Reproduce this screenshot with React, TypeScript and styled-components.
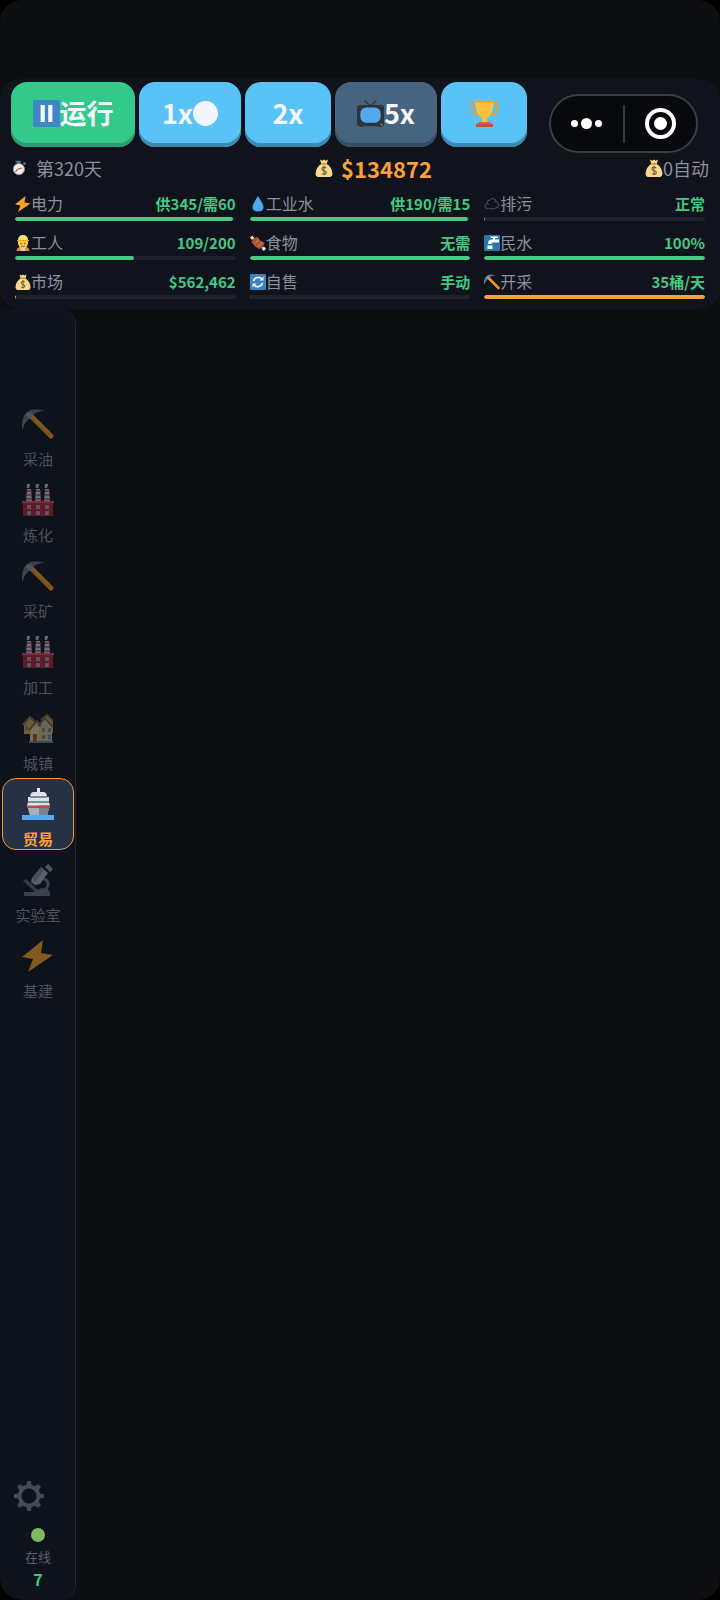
import { useState } from "react";
import type { ReactNode } from "react";
import styled, { createGlobalStyle } from "styled-components";

const GlobalStyle = createGlobalStyle`
  * {
    box-sizing: border-box;
  }
  html {
    background: #000;
  }
  body {
    margin: 0;
    font-family: "Noto Sans CJK SC", "Noto Sans", sans-serif;
  }
  button {
    font-family: inherit;
    border: none;
    cursor: pointer;
  }
`;

const Screen = styled.div`
  position: relative;
  display: flex;
  flex-direction: column;
  min-height: 100vh;
  padding-top: 79px;
  background: #0c0e12;
  border-radius: 22px;
  overflow: hidden;
`;

const Header = styled.header`
  padding: 3px 11px 10px;
  background: #10131c;
  border-radius: 20px;
`;

const Toolbar = styled.div`
  display: flex;
  gap: 4px;
`;

const tones = {
  green: ["#32c98a", "#2d9a74"],
  blue: ["#59c3f7", "#3e87ae"],
  slate: ["#466480", "#384d64"],
};

const SpeedButton = styled.button<{ $tone: keyof typeof tones; $width: number }>`
  display: flex;
  align-items: center;
  justify-content: center;
  width: ${(p) => p.$width}px;
  height: 65px;
  padding: 0 0 3px;
  color: #f4f7fc;
  font-size: 27px;
  font-weight: 700;
  line-height: 32px;
  border-radius: 16px;
  background: ${(p) => tones[p.$tone][0]};
  box-shadow: inset 0 -4px 0 ${(p) => tones[p.$tone][1]};
`;

const Dot = styled.span<{ $size: number; $color: string }>`
  width: ${(p) => p.$size}px;
  height: ${(p) => p.$size}px;
  border-radius: 50%;
  background: ${(p) => p.$color};
`;

/* floats over the header, like the host app's own menu */
const Capsule = styled.div`
  position: absolute;
  top: 94px;
  right: 22px;
  display: flex;
  align-items: center;
  width: 149px;
  height: 59px;
  border: 2px solid #3c3e44;
  border-radius: 30px;
  background: #08090d;
`;

const CapsuleButton = styled.button`
  display: flex;
  flex: 1;
  align-items: center;
  justify-content: center;
  gap: 3px;
  height: 100%;
  padding: 0;
  background: none;
`;

const CapsuleLine = styled.span`
  width: 2px;
  height: 38px;
  background: #36383e;
`;

const Ring = styled.span`
  display: flex;
  align-items: center;
  justify-content: center;
  width: 31px;
  height: 31px;
  border: 4px solid #fff;
  border-radius: 50%;
`;

const StatusRow = styled.div`
  display: flex;
  align-items: center;
  justify-content: space-between;
  margin: 7px 0 9px;
  height: 28px;
`;

const Status = styled.div<{ $gap?: number }>`
  display: flex;
  align-items: center;
  gap: ${(p) => p.$gap ?? 0}px;
  color: #8c909b;
  font-size: 18px;
  line-height: 28px;
`;

const Money = styled.strong`
  color: #f9a03a;
  font-size: 22px;
  font-weight: 700;
`;

const Meters = styled.div`
  display: grid;
  grid-template-columns: repeat(3, minmax(0, 1fr));
  gap: 10px 14px;
  padding: 1px 4px 0;
`;

const MeterHead = styled.div`
  display: flex;
  align-items: center;
  height: 25px;
  padding-bottom: 2px;
  line-height: 23px;
  white-space: nowrap;
`;

const MeterLabel = styled.span`
  flex: 1;
  color: #8c909b;
  font-size: 16px;
`;

const MeterValue = styled.span`
  color: #43c883;
  font-size: 15px;
  font-weight: 700;
`;

const Track = styled.div`
  height: 4px;
  border-radius: 2px;
  background: #1e212a;
  overflow: hidden;
`;

const Fill = styled.div<{ $color: string }>`
  height: 100%;
  min-width: 1px;
  border-radius: 2px;
  background: ${(p) => p.$color};
`;

const Sidebar = styled.aside`
  display: flex;
  flex: 1;
  flex-direction: column;
  justify-content: space-between;
  width: 76px;
  padding: 89px 1px 9px 2px;
  background: #0e121a;
  border-right: 1px solid #23272f;
  border-radius: 0 16px 16px 22px;
`;

const Nav = styled.nav`
  display: flex;
  flex-direction: column;
  gap: 4px;
`;

const NavButton = styled.button<{ $active: boolean }>`
  display: flex;
  flex-direction: column;
  align-items: center;
  width: 72px;
  height: 72px;
  padding: 9px 0 0;
  border: 1px solid ${(p) => (p.$active ? "#f0992f" : "transparent")};
  border-radius: 14px;
  background: ${(p) => (p.$active ? "#273146" : "none")};
  color: ${(p) => (p.$active ? "#f9a03a" : "#8c909b")};
  font-size: 15px;
  font-weight: ${(p) => (p.$active ? 700 : 400)};
  line-height: 20px;

  > * {
    opacity: ${(p) => (p.$active ? 1 : 0.5)};
  }
`;

const NavText = styled.span`
  margin-top: 9px;
`;

const SideFooter = styled.div`
  display: flex;
  flex-direction: column;
  align-items: center;
  color: #5a5e69;
  font-size: 13px;
  line-height: 20px;
`;

const GearButton = styled.button`
  align-self: flex-start;
  height: 30px;
  margin: 0 0 17px 12px;
  padding: 0;
  background: none;
`;

const OnlineText = styled.span`
  margin-top: 5px;
`;

const OnlineCount = styled.strong`
  color: #3cc886;
  font-size: 16px;
  line-height: 24px;
`;

const Svg = styled.svg`
  display: block;
  flex: none;
`;

const icons: Record<string, ReactNode> = {
  pause: (
    <>
      <rect width="32" height="32" rx="2" fill="#4186c4" />
      <path d="M9 6h5v20H9zM18 6h5v20h-5z" fill="#f4f7fc" />
    </>
  ),
  tv: (
    <>
      <path d="M9 1l7 6 7-6" fill="none" stroke="#2d3640" strokeWidth="1.6" />
      <rect y="6" width="32" height="25" rx="3" fill="#2b353e" />
      <path d="M3 29h4v3H3zM25 29h4v3h-4z" fill="#2b353e" />
      <rect x="4" y="9" width="24" height="18" rx="7" fill="#56a8ed" />
      <circle cx="29" cy="29" r="1" fill="#9aa5af" />
    </>
  ),
  trophy: (
    <>
      <path
        d="M7 4H1q0 9 2 12 2 2 8 1M25 4h6q0 9-2 12-2 2-8 1"
        fill="none"
        stroke="#e0a042"
        strokeWidth="2.500"
      />
      <path d="M5 1h22q0 17-8 20v6h-6v-6Q5 18 5 1z" fill="#fdc23b" />
      <path d="M5 1h22v2H5z" fill="#e9a238" />
      <path d="M9 26h14v3H9z" fill="#d2693c" />
      <path d="M6 28h20v4H6z" fill="#bf5138" />
    </>
  ),
  watch: (
    <>
      <path d="M8 3h10v3h-3v3h-4V6H8zM21 8l3-3 3 3-3 3z" fill="#5f7073" />
      <circle cx="14" cy="18" r="10" fill="#e6e8e8" stroke="#8b989d" strokeWidth="1.500" />
      <circle cx="14" cy="18" r="7" fill="#f6f3f1" />
      <path d="M8 23l4-5 8-2" fill="none" stroke="#be4d4d" strokeWidth="2" />
    </>
  ),
  money: (
    <>
      <path
        d="M9 1l4 2 3-2 3 2 4-2-2 8q9 6 10 16 0 7-5 7H6q-5 0-5-7Q2 15 11 9z"
        fill="#f8d98b"
      />
      <path d="M11 7h10v3H11z" fill="#c99545" />
      <path
        d="M20 16q-4-3-7 0-2 4 3 5t4 4q-3 4-8 1M16 12v17"
        fill="none"
        stroke="#6c5942"
        strokeWidth="2"
      />
    </>
  ),
  bolt: <path d="M21 0L0 17l11 2L6 32l25-17-12-2z" fill="#f9a324" />,
  worker: (
    <>
      <path d="M3 32q0-9 13-9t13 9z" fill="#e98b2a" />
      <path d="M10 23h12l-2 9h-8z" fill="#c9d3d7" />
      <path d="M6 9h20v8q-2 10-10 10T6 17z" fill="#fbcf39" />
      <path d="M6 11Q6 0 16 0t10 11z" fill="#f5e070" />
      <path d="M4 10h24v2H4z" fill="#e0ac3a" />
      <circle cx="12" cy="17" r="1.300" fill="#574031" />
      <circle cx="20" cy="17" r="1.300" fill="#574031" />
      <path d="M12 22q4 2 8 0" fill="none" stroke="#704f26" strokeWidth="1.500" />
    </>
  ),
  drop: <path d="M16 0q11 17 11 22 0 9-11 9T5 22Q5 17 16 0z" fill="#4ca7f3" />,
  food: (
    <>
      <path d="M4 4l24 24" stroke="#f2dec0" strokeWidth="3" />
      <path d="M0 5l5-4 3 5-4 4zM23 28l5-5 4 4-4 5z" fill="#f2dec0" />
      <path d="M3 14Q6 5 15 4q4 8 14 11-1 11-11 13Q9 24 3 14z" fill="#a95335" />
      <path d="M9 17q7-2 8-10M15 23q7-2 9-9" fill="none" stroke="#d98261" strokeWidth="2" />
    </>
  ),
  refresh: (
    <>
      <rect width="32" height="32" rx="2" fill="#3c82bd" />
      <path
        d="M7 14a10 10 0 0 1 17-4M25 18a10 10 0 0 1-17 4"
        fill="none"
        stroke="#eef5fa"
        strokeWidth="3.500"
      />
      <path d="M19 13h8V5zM13 19H5v8z" fill="#eef5fa" />
    </>
  ),
  cloud: (
    <path
      d="M9 25q-7 1-7-5 0-4 4-5-1-7 6-7 3-5 8-2 4 0 4 5 6 2 5 7 0 6-6 6-3 3-7 1-4 2-7 0zM6 15q1 3 4 2M24 11q-3 0-4 2"
      fill="none"
      stroke="#656873"
      strokeWidth="1.500"
    />
  ),
  tap: (
    <>
      <rect width="32" height="32" rx="2" fill="#2d76ac" />
      <path d="M13 3h15v3h-6v3h8v6H18q-3 0-3 3H8q0-8 6-9h4V6h-5zM7 21h10v7H7z" fill="#fff" />
    </>
  ),
  pickaxe: (
    <>
      <path d="M9 8l20 20" stroke="#ef9629" strokeWidth="5" strokeLinecap="round" />
      <path d="M0 21Q-1 9 5 4 11-1 23 3q-8 0-12 4l-5 5q-4 3-5 9z" fill="#68777f" />
      <path d="M4 7l4-3 4 3-4 4z" fill="#8796a0" />
    </>
  ),
  factory: (
    <>
      <path d="M4 18l1-13h4l1 13zM13 18l1-13h4l1 13zM22 18l1-13h4l1 13z" fill="#d6d2da" />
      <path
        d="M5 7h5M4 11h6M4 15h6M14 7h5M13 11h6M13 15h6M23 7h5M22 11h6M22 15h6"
        stroke="#9e4456"
        strokeWidth="1.500"
      />
      <path d="M6 4V1h2M15 4V1h2M24 4V1h2" fill="none" stroke="#b4bec6" strokeWidth="2.500" />
      <path d="M1 18h30v14H1z" fill="#b72035" />
      <path d="M0 17h32v2H0z" fill="#d0555f" />
      <path
        d="M5 21h4v4H5zM14 21h4v4h-4zM23 21h4v4h-4zM5 27h4v4H5zM14 27h4v4h-4zM23 27h4v4h-4z"
        fill="#a59aa8"
      />
    </>
  ),
  houses: (
    <>
      <path d="M2 13l6-7 7 7v9H2zM19 9l6-5 6 6v11H19z" fill="#d5a545" />
      <path d="M1 13l7-8 6 6M19 8l6-5 6 6" fill="none" stroke="#8c7043" strokeWidth="2" />
      <path d="M8 17l7-8 7 8v13H8z" fill="#dccb92" />
      <path d="M17 14l6-8 7 8v16H17z" fill="#c9bc8b" />
      <path d="M7 18l8-9 4 5M16 14l7-8 8 9" fill="none" stroke="#76624f" strokeWidth="2" />
      <path d="M20 16h3v4h-3zM26 16h3v4h-3zM20 23h3v4h-3zM26 23h3v4h-3zM3 14h3v4H3z" fill="#618aa5" />
      <path d="M11 22h4v7h-4z" fill="#a6513d" />
      <path d="M7 29h24v2H7z" fill="#76836d" />
    </>
  ),
  ship: (
    <>
      <path d="M15 0h3v5h-3z" fill="#e4e7eb" />
      <path d="M11 4h11q3 1 3 5h2v5l1 4H5l1-4V9h2q0-4 3-5z" fill="#dfe2e8" />
      <path d="M8 9h17M6 14h21" stroke="#626b75" strokeWidth="1.500" />
      <path d="M5 17h23l-3 11H8z" fill="#a9afb9" />
      <path d="M17 17h11l-3 11h-8z" fill="#7b828e" />
      <path d="M5 18h23v2H5z" fill="#c24450" />
      <path d="M0 27h32v5H0z" fill="#55a9f2" />
    </>
  ),
  microscope: (
    <>
      <path d="M1 17l3-2 12 11-2 3z" fill="#5c6a73" />
      <path d="M20 14q9 3 5 10-2 4-8 4" fill="none" stroke="#65747d" strokeWidth="3" />
      <path d="M2 28h12q3-4 7-4t7 4v4H2z" fill="#69767e" />
      <path d="M10 14l9-11 7 6-8 11-5 1-4-3z" fill="#a5afb9" />
      <path d="M10 14l9-11 3 3-9 12z" fill="#7d8d98" />
      <path d="M23 3l3-3 5 5-3 3z" fill="#8d99a4" />
    </>
  ),
  gear: (
    <>
      <circle cx="16" cy="16" r="10" fill="none" stroke="#444b53" strokeWidth="4" />
      <g fill="#444b53">
        {[0, 45, 90, 135, 180, 225, 270, 315].map((a) => (
          <path key={a} d="M13 5l1-5h4l1 5z" transform={`rotate(${a} 16 16)`} />
        ))}
      </g>
    </>
  ),
};

function Icon({ name, size }: { name: string; size: number }) {
  return (
    <Svg width={size} height={size} viewBox="0 0 32 32" aria-hidden="true">
      {icons[name]}
    </Svg>
  );
}

const GREEN = "#4ac982";
const ORANGE = "#f9a03a";

const meters = [
  { icon: "bolt", label: "电力", value: "供345/需60", percent: 99, color: GREEN },
  { icon: "drop", label: "工业水", value: "供190/需15", percent: 99, color: GREEN },
  { icon: "cloud", label: "排污", value: "正常", percent: 0, color: "#8c909b" },
  { icon: "worker", label: "工人", value: "109/200", percent: 54, color: GREEN },
  { icon: "food", label: "食物", value: "无需", percent: 100, color: GREEN },
  { icon: "tap", label: "民水", value: "100%", percent: 100, color: GREEN },
  { icon: "money", label: "市场", value: "$562,462", percent: 0, color: ORANGE },
  { icon: "refresh", label: "自售", value: "手动", percent: 0, color: "#3a3e48" },
  { icon: "pickaxe", label: "开采", value: "35桶/天", percent: 100, color: ORANGE },
];

const sections = [
  { icon: "pickaxe", label: "采油" },
  { icon: "factory", label: "炼化" },
  { icon: "pickaxe", label: "采矿" },
  { icon: "factory", label: "加工" },
  { icon: "houses", label: "城镇" },
  { icon: "ship", label: "贸易" },
  { icon: "microscope", label: "实验室" },
  { icon: "bolt", label: "基建" },
];

export default function App() {
  const [section, setSection] = useState("贸易");

  return (
    <>
      <GlobalStyle />
      <Screen>
        <Header>
          <Toolbar>
            <SpeedButton $tone="green" $width={124}>
              <Icon name="pause" size={27} />
              运行
            </SpeedButton>
            <SpeedButton $tone="blue" $width={102}>
              1x
              <Dot $size={25} $color="#f4f6fd" />
            </SpeedButton>
            <SpeedButton $tone="blue" $width={86}>
              2x
            </SpeedButton>
            <SpeedButton $tone="slate" $width={102}>
              <Icon name="tv" size={27} />
              5x
            </SpeedButton>
            <SpeedButton $tone="blue" $width={86} aria-label="成就">
              <Icon name="trophy" size={27} />
            </SpeedButton>
          </Toolbar>
          <StatusRow>
            <Status $gap={7}>
              <Icon name="watch" size={18} />
              第320天
            </Status>
            <Status $gap={8}>
              <Icon name="money" size={18} />
              <Money>$134872</Money>
            </Status>
            <Status>
              <Icon name="money" size={18} />
              0自动
            </Status>
          </StatusRow>
          <Meters>
            {meters.map((m) => (
              <div key={m.label}>
                <MeterHead>
                  <Icon name={m.icon} size={16} />
                  <MeterLabel>{m.label}</MeterLabel>
                  <MeterValue>{m.value}</MeterValue>
                </MeterHead>
                <Track>
                  <Fill $color={m.color} style={{ width: `${m.percent}%` }} />
                </Track>
              </div>
            ))}
          </Meters>
        </Header>

        <Capsule>
          <CapsuleButton aria-label="更多">
            <Dot $size={7} $color="#fff" />
            <Dot $size={11} $color="#fff" />
            <Dot $size={7} $color="#fff" />
          </CapsuleButton>
          <CapsuleLine />
          <CapsuleButton aria-label="关闭">
            <Ring>
              <Dot $size={13} $color="#fff" />
            </Ring>
          </CapsuleButton>
        </Capsule>

        <Sidebar>
          <Nav>
            {sections.map((s) => (
              <NavButton
                key={s.label}
                $active={s.label === section}
                onClick={() => setSection(s.label)}
              >
                <Icon name={s.icon} size={32} />
                <NavText>{s.label}</NavText>
              </NavButton>
            ))}
          </Nav>
          <SideFooter>
            <GearButton aria-label="设置">
              <Icon name="gear" size={30} />
            </GearButton>
            <Dot $size={14} $color="#7fb85e" />
            <OnlineText>在线</OnlineText>
            <OnlineCount>7</OnlineCount>
          </SideFooter>
        </Sidebar>
      </Screen>
    </>
  );
}
